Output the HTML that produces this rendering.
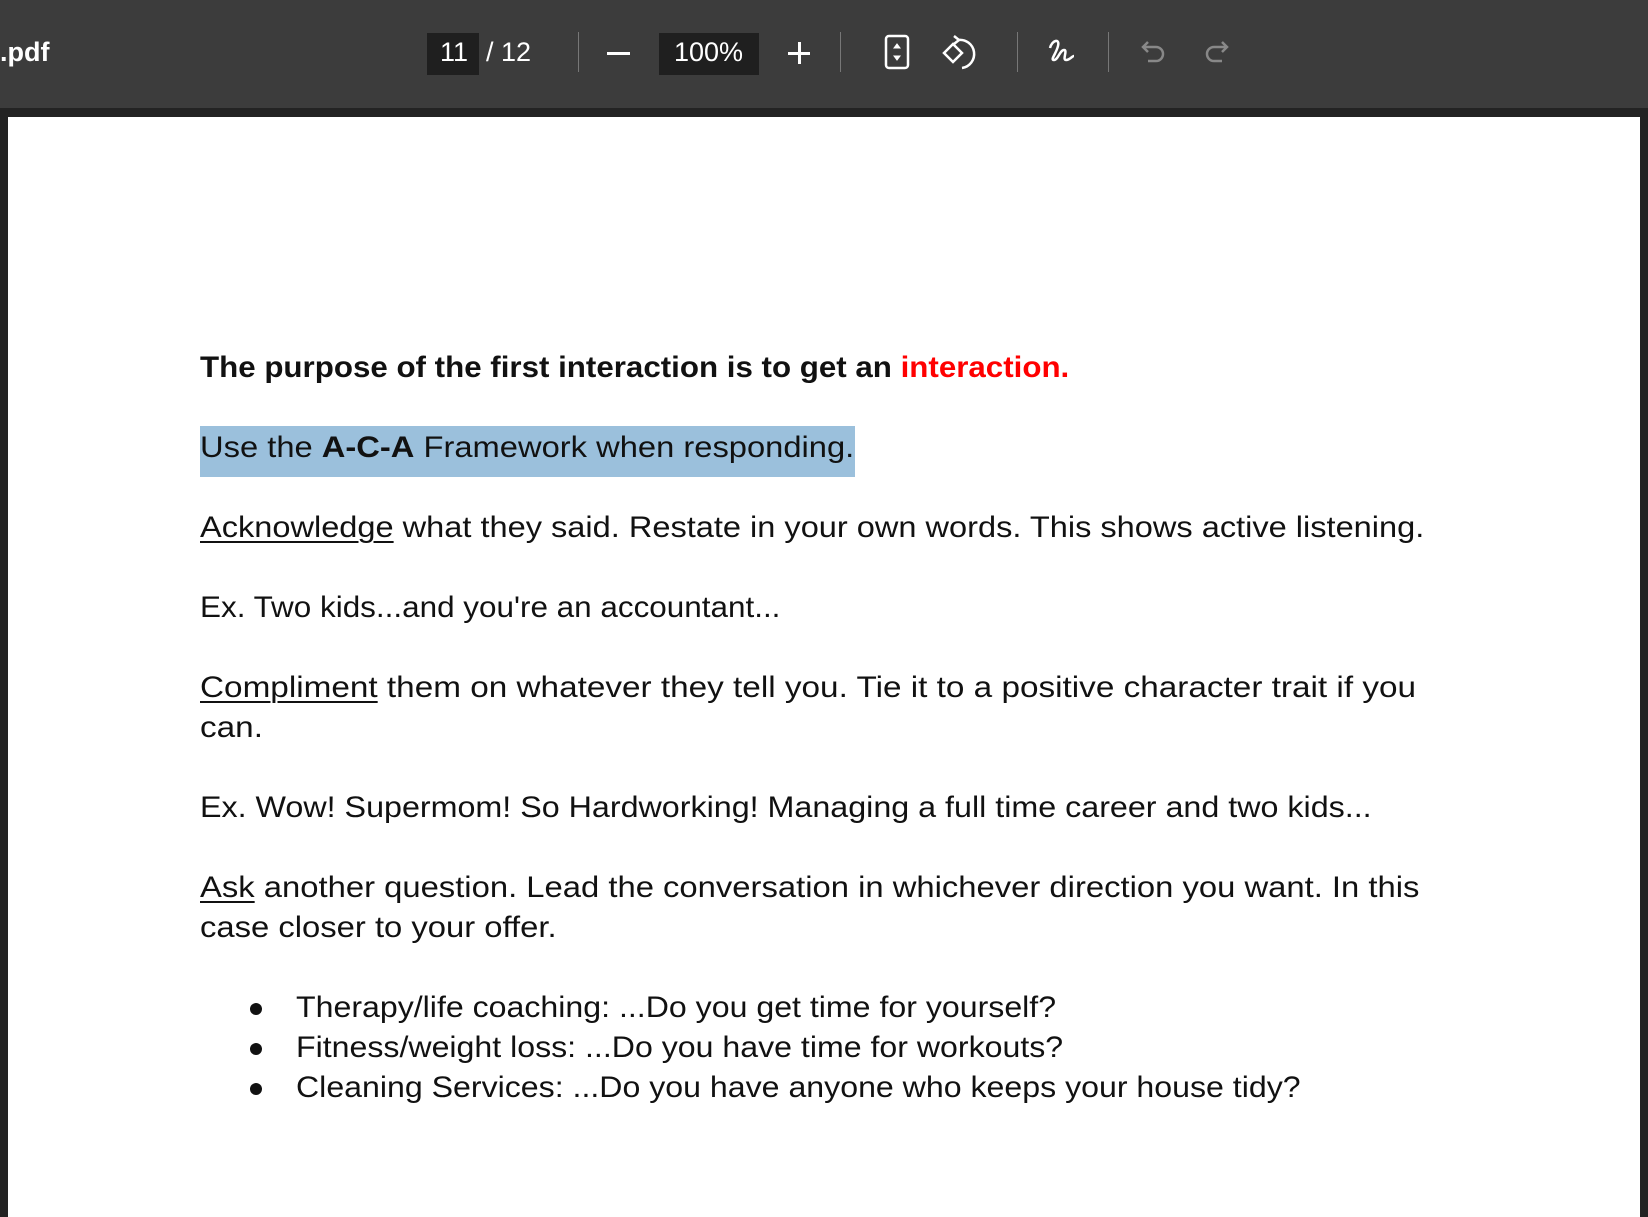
<!DOCTYPE html>
<html><head><meta charset="utf-8"><style>
*{margin:0;padding:0;box-sizing:border-box}
body{width:1648px;height:1162px;background:#232323;position:relative;overflow:hidden;font-family:"Liberation Sans",sans-serif}
#tb{position:absolute;left:0;top:0;width:1648px;height:108px;background:#3c3c3c;color:#fff}
.t{position:absolute;font-size:27px;line-height:40px;top:32px}
.box{position:absolute;top:33px;height:42px;background:#1f1f1f}
.sep{position:absolute;top:32px;width:1px;height:40px;background:#777}
#page{position:absolute;left:8px;top:117px;width:1632px;height:1100px;background:#fff}
.l{position:absolute;left:200px;font-size:30px;line-height:40px;color:#111;white-space:nowrap;transform:scaleX(1.08);transform-origin:0 0}
u{text-decoration-thickness:2px;text-underline-offset:4px}
.hl{position:absolute;left:200px;top:426px;width:655px;height:51px;background:#9bc0dc}
.b{position:absolute;left:250px;width:12px;height:12px;border-radius:50%;background:#111}
</style></head><body>
<div id="tb">
<div class="t" style="left:0;font-weight:bold">.pdf</div>
<div class="box" style="left:427px;width:52px"></div>
<div class="t" style="left:440px">11</div>
<div class="t" style="left:486px">/ 12</div>
<div class="sep" style="left:578px"></div>
<div style="position:absolute;left:607px;top:52px;width:23px;height:3px;background:#fff"></div>
<div class="box" style="left:659px;width:100px"></div>
<div class="t" style="left:674px">100%</div>
<div style="position:absolute;left:788px;top:52px;width:22px;height:3px;background:#fff"></div>
<div style="position:absolute;left:798px;top:42px;width:3px;height:22px;background:#fff"></div>
<div class="sep" style="left:840px"></div>
<svg style="position:absolute;left:884px;top:34px" width="26" height="36" viewBox="0 0 26 36" fill="none" stroke="#fff" stroke-width="2.5"><rect x="2" y="2" width="22" height="32" rx="3"/><path d="M10 14l3-4 3 4z M10 22l3 4 3-4z" fill="#fff" stroke-width="1"/></svg>
<svg style="position:absolute;left:940px;top:34px" width="40" height="38" viewBox="0 0 40 38" fill="none" stroke="#fff" stroke-width="2.5"><path d="M4 19l9-9 9 9-9 9z"/><path d="M18 6a14 14 0 1 1 4 28"/><path d="M14 2l5 4-5 4"/></svg>
<div class="sep" style="left:1017px"></div>
<svg style="position:absolute;left:1046px;top:34px" width="34" height="36" viewBox="0 0 34 36" fill="none" stroke="#fff" stroke-width="2.5"><path d="M4 14c2-8 10-10 8-2-2 8-8 14-4 14 4 0 6-10 10-10s-2 10 2 10 6-4 8-4"/></svg>
<div class="sep" style="left:1108px"></div>
<svg style="position:absolute;left:1140px;top:38px" width="28" height="28" viewBox="0 0 28 28" fill="none" stroke="#888" stroke-width="2.5"><path d="M8 4L3 9l5 5"/><path d="M3 9h13a7 7 0 0 1 0 14h-8"/></svg>
<svg style="position:absolute;left:1202px;top:38px" width="28" height="28" viewBox="0 0 28 28" fill="none" stroke="#888" stroke-width="2.5"><path d="M20 4l5 5-5 5"/><path d="M25 9H12a7 7 0 0 0 0 14h8"/></svg>
</div>
<div id="page"></div>
<div class="hl"></div>
<div class="l" style="top:348px;font-weight:bold;transform:scaleX(1.043)">The purpose of the first interaction is to get an <span style="color:#f00">interaction.</span></div>
<div class="l" style="top:428px;transform:scaleX(1.09)">Use the <b>A-C-A</b> Framework when responding.</div>
<div class="l" style="top:508px;transform:scaleX(1.085)"><u>Acknowledge</u> what they said. Restate in your own words. This shows active listening.</div>
<div class="l" style="top:588px;transform:scaleX(1.048)">Ex. Two kids...and you're an accountant...</div>
<div class="l" style="top:668px;transform:scaleX(1.11)"><u>Compliment</u> them on whatever they tell you. Tie it to a positive character trait if you</div>
<div class="l" style="top:708px;transform:scaleX(1.11)">can.</div>
<div class="l" style="top:788px;transform:scaleX(1.075)">Ex. Wow! Supermom! So Hardworking! Managing a full time career and two kids...</div>
<div class="l" style="top:868px;transform:scaleX(1.093)"><u>Ask</u> another question. Lead the conversation in whichever direction you want. In this</div>
<div class="l" style="top:908px;transform:scaleX(1.093)">case closer to your offer.</div>
<div class="b" style="top:1003px"></div><div class="l" style="left:296px;top:988px;transform:scaleX(1.07)">Therapy/life coaching: ...Do you get time for yourself?</div>
<div class="b" style="top:1043px"></div><div class="l" style="left:296px;top:1028px;transform:scaleX(1.07)">Fitness/weight loss: ...Do you have time for workouts?</div>
<div class="b" style="top:1083px"></div><div class="l" style="left:296px;top:1068px;transform:scaleX(1.07)">Cleaning Services: ...Do you have anyone who keeps your house tidy?</div>
</body></html>
